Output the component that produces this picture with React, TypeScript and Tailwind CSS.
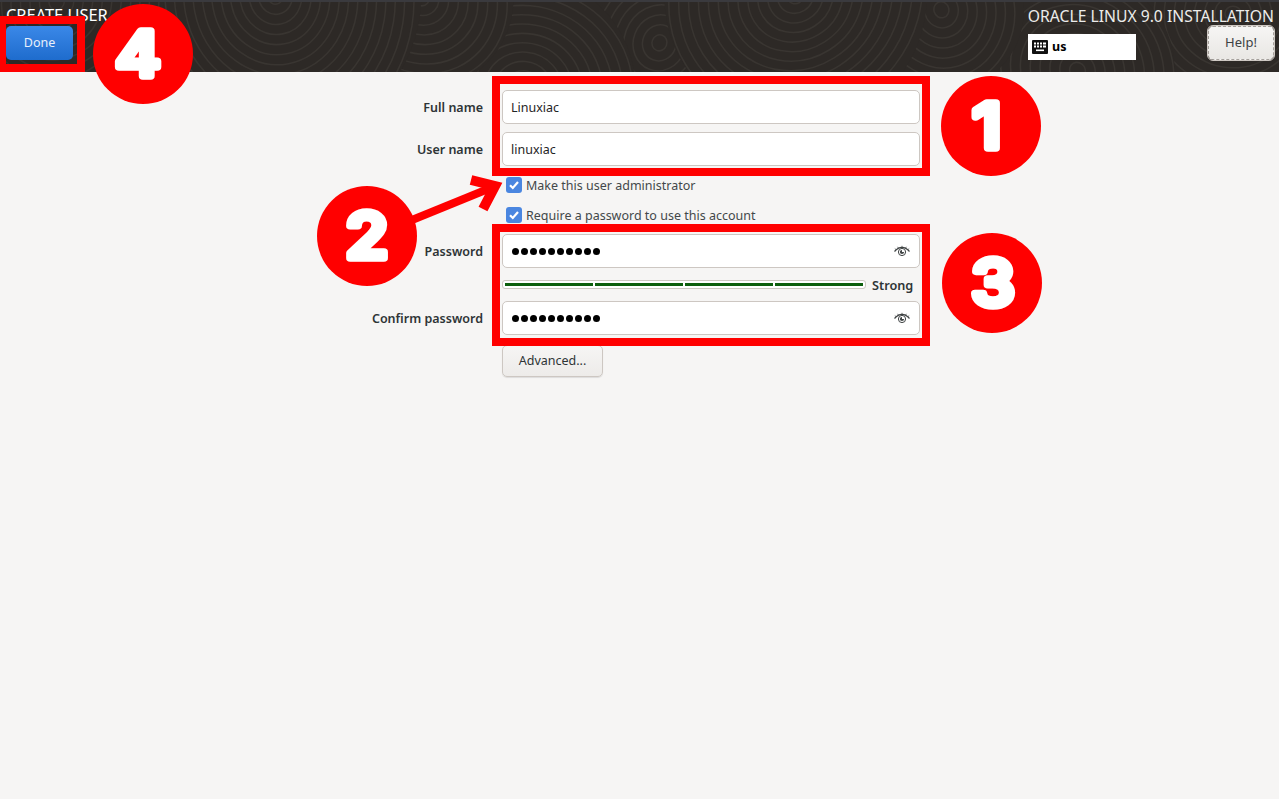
import React from "react";

const swirls: [number, number, number][] = [
  [1250, 12, 110],
  [1090, 70, 100],
  [950, 8, 85],
  [660, 42, 70],
  [800, -6, 135],
  [520, 88, 115],
  [415, -4, 95],
  [265, -6, 150],
  [40, 0, 110],
];

function HeaderPattern() {
  return (
    <svg className="absolute inset-0 h-full w-full" viewBox="0 0 1279 72" aria-hidden="true">
      {swirls.map(([cx, cy, R], i) => {
        const rings: number[] = [];
        for (let r = 8; r <= R; r += 10) rings.push(r);
        return (
          <g key={i} fill="none" stroke="#393531" strokeWidth="1.6">
            <circle cx={cx} cy={cy} r={R} fill="#2d2926" stroke="none" />
            {rings.map((r) => (
              <ellipse key={r} cx={cx} cy={cy} rx={r * 1.04} ry={r * 0.96} transform={`rotate(${i * 37} ${cx} ${cy})`} />
            ))}
          </g>
        );
      })}
    </svg>
  );
}

function Eye() {
  return (
    <svg width="18" height="14" viewBox="0 0 18 14" fill="none" stroke="#3f4344" strokeWidth="1">
      <path d="M1.5 7.5C4 4.6 6.3 3.4 9 3.4s5 1.2 7.5 4.1" strokeWidth="1.2" />
      <path d="M3 5.6 1.8 4.6M5.4 4 4.6 2.8M9 3.2V1.8M12.6 4l.8-1.2M15 5.6l1.2-1" strokeWidth="0.7" />
      <circle cx="9" cy="8" r="3.6" />
      <path d="M9 5.9A2.1 2.1 0 1 0 11.1 8H9Z" fill="#3f4344" stroke="none" />
    </svg>
  );
}

function Check({ label }: { label: string }) {
  return (
    <div className="flex h-4 items-center">
      <div className="ml-1 flex h-4 w-4 items-center justify-center rounded-[3px] bg-[#4a86e0]">
        <svg width="12" height="12" viewBox="0 0 12 12" fill="none" stroke="#ffffff" strokeWidth="2.2">
          <path d="M2 6.2 4.8 9 10 3" />
        </svg>
      </div>
      <span className="ml-1 pt-[2px] text-[12.5px] leading-4 text-[#43484a]">{label}</span>
    </div>
  );
}

function Row({ label, children }: { label: string; children: React.ReactNode }) {
  return (
    <div className="flex h-[34px] items-center">
      <div className="w-[483px] pt-[2px] text-right text-[12.5px] font-semibold text-[#2e3436]">{label}</div>
      <div className="ml-[19px] w-[418px]">{children}</div>
    </div>
  );
}

function TextBox({ value }: { value: string }) {
  return (
    <div className="flex h-[34px] items-center rounded-[5px] border border-[#cdc7c2] bg-white px-2 pt-[2px] text-[12.5px] text-[#1f2426]">
      {value}
    </div>
  );
}

function PasswordBox() {
  return (
    <div className="flex h-[34px] items-center justify-between rounded-[5px] border border-[#cdc7c2] bg-white pl-[9px] pr-2">
      <div className="flex gap-[2px]">
        {Array.from({ length: 10 }).map((_, i) => (
          <span key={i} className="h-[7px] w-[7px] rounded-full bg-black" />
        ))}
      </div>
      <Eye />
    </div>
  );
}

function Badge({ n, dx, className }: { n: string; dx: number; className: string }) {
  return (
    <div className={`absolute h-[100px] w-[100px] ${className}`}>
      <svg width="100" height="100" viewBox="0 0 100 100">
        <circle cx="50" cy="50" r="50" fill="#ff0000" />
        <text
          transform={`translate(${50 + dx} 72) scale(1.12 1)`}
          textAnchor="middle"
          fontSize="62"
          fontWeight="500"
          fontFamily="Inter, 'Noto Sans', sans-serif"
          fill="#ffffff"
          stroke="#ffffff"
          strokeWidth="7.5"
          strokeLinejoin="round"
        >
          {n}
        </text>
      </svg>
    </div>
  );
}

export default function App() {
  return (
    <div className="relative h-screen overflow-hidden bg-[#f6f5f4] font-['Noto_Sans',sans-serif]">
      <header className="relative flex h-[72px] justify-between overflow-hidden border-t-2 border-[#3a3a3e] bg-[#2d2926]">
        <HeaderPattern />
        <div className="relative pl-[6px] pt-[3px]">
          <div className="text-[16.4px] leading-5 text-white">CREATE USER</div>
          <button className="mt-[1px] flex h-[34px] w-[67px] items-center justify-center rounded-[5px] bg-gradient-to-b from-[#3a88e8] to-[#1e6ccd] text-[12.5px] text-[#e8f0fb]">
            Done
          </button>
        </div>
        <div className="relative flex flex-col items-end pr-[5px] pt-[4px]">
          <div className="whitespace-nowrap text-[15.7px] leading-5 text-[#ececea]">ORACLE LINUX 9.0 INSTALLATION</div>
          <div className="flex w-[246px] justify-between">
            <div className="mt-[8px] flex h-[26px] w-[108px] items-center bg-white pl-[4px] text-[12.5px] font-bold text-black">
              <svg width="16" height="14" viewBox="0 0 16 14">
                <rect x="0" y="0" width="16" height="14" rx="1" fill="#111111" />
                <g fill="#ffffff">
                  <rect x="2" y="2.5" width="2" height="2" />
                  <rect x="5" y="2.5" width="2" height="2" />
                  <rect x="8" y="2.5" width="2" height="2" />
                  <rect x="11" y="2.5" width="3" height="2" />
                  <rect x="2" y="5.5" width="2" height="2" />
                  <rect x="5" y="5.5" width="2" height="2" />
                  <rect x="8" y="5.5" width="2" height="2" />
                  <rect x="11" y="5.5" width="3" height="2" />
                  <rect x="4" y="9.5" width="8" height="1.6" />
                </g>
              </svg>
              <span className="ml-[4px]">us</span>
            </div>
            <button className="flex h-[34px] w-[66px] items-center justify-center rounded-[5px] border border-dashed border-[#a5a09b] bg-gradient-to-b from-[#f6f5f4] to-[#e9e7e4] text-[13px] text-[#3d4244] outline outline-1 outline-[#cdc7c2]">
              Help!
            </button>
          </div>
        </div>
      </header>

      <main className="flex flex-col pt-[18px]">
        <Row label="Full name">
          <TextBox value="Linuxiac" />
        </Row>
        <div className="mt-2">
          <Row label="User name">
            <TextBox value="linuxiac" />
          </Row>
        </div>
        <div className="ml-[502px] mt-[11px] flex flex-col gap-[14px]">
          <Check label="Make this user administrator" />
          <Check label="Require a password to use this account" />
        </div>
        <div className="mt-[11px]">
          <Row label="Password">
            <PasswordBox />
          </Row>
        </div>
        <div className="ml-[502px] mt-[12px] flex h-[9px] w-[418px] items-center">
          <div className="flex h-[9px] w-[364px] gap-[2px] rounded-[3px] border border-[#cdc7c2] bg-white px-[2px] py-[2px]">
            <span className="flex-1 bg-[#0d5f0d]" />
            <span className="flex-1 bg-[#0d5f0d]" />
            <span className="flex-1 bg-[#0d5f0d]" />
            <span className="flex-1 bg-[#0d5f0d]" />
          </div>
          <span className="ml-[6px] pt-[2px] text-[12.7px] font-semibold text-[#2e3436]">Strong</span>
        </div>
        <div className="mt-3">
          <Row label="Confirm password">
            <PasswordBox />
          </Row>
        </div>
        <button className="ml-[502px] mt-[10px] flex h-[32px] w-[101px] items-center justify-center rounded-[5px] border border-[#cdc7c2] bg-gradient-to-b from-[#f6f5f4] to-[#edebe9] text-[12.5px] text-[#2e3436] shadow-[0_1px_1px_rgba(0,0,0,0.1)]">
          Advanced...
        </button>
      </main>

      <div className="absolute left-[492px] top-[76px] h-[100px] w-[438px] border-8 border-[#ff0000]" />
      <div className="absolute left-[492px] top-[224px] h-[122px] w-[438px] border-8 border-[#ff0000]" />
      <div className="absolute left-[-2px] top-[16px] h-[56px] w-[87px] border-8 border-[#ff0000]" />

      <Badge n="1" dx={-4} className="left-[941px] top-[76px]" />
      <Badge n="2" dx={0} className="left-[317px] top-[186px]" />
      <Badge n="3" dx={1} className="left-[942px] top-[233px]" />
      <Badge n="4" dx={-5} className="left-[93px] top-[4px]" />

      <svg className="absolute left-[405px] top-[170px]" width="105" height="60" viewBox="0 0 105 60" fill="none" stroke="#ff0000" strokeWidth="8">
        <path d="M7 50 88 17" />
        <path d="M66 10 90 16 78 39" strokeWidth="10" />
      </svg>
    </div>
  );
}
